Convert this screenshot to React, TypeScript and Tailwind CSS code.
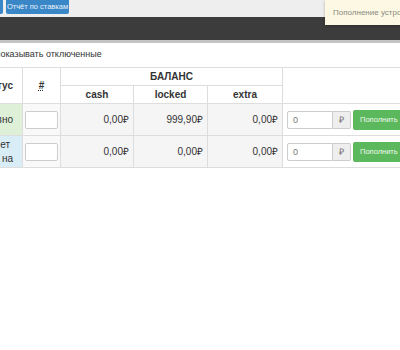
const rows = [
  { status: [{ t: 'вно', pr: 'pr-[9px]' }], tone: 'bg-[#dff0d8]', cash: '0,00₽', locked: '999,90₽', extra: '0,00₽' },
  {
    status: [
      { t: 'ет', pr: 'pr-[12px]' },
      { t: 'на', pr: 'pr-[9px]' },
    ],
    tone: 'bg-[#d9edf7]',
    cash: '0,00₽',
    locked: '0,00₽',
    extra: '0,00₽',
  },
];

const App = () => {
  return (
    <div className="relative w-[400px] h-[350px] overflow-hidden bg-white text-[#333] font-['Liberation_Sans',Arial,sans-serif]">
      {/* top toolbar */}
      <div className="h-[17px] bg-[#eeeeee] flex items-start gap-[3px] ml-[-40px]">
        <div className="h-[14px] w-[43px] bg-[#3a87c8] rounded-b-[2px]" />
        <div className="h-[14px] w-[63px] bg-[#3a87c8] rounded-b-[2px] text-[#e8f1fa] text-[7.5px] leading-[14px] text-center whitespace-nowrap">
          Отчёт по ставкам
        </div>
      </div>
      <div className="h-[23px] bg-[#3c3c3c]" />
      <div className="h-[3px] bg-[#c4c4c4]" />

      <div className="absolute top-0 left-[325px] w-[100px] h-[25px] bg-[#fcf8e3] shadow-[0_1px_3px_rgba(0,0,0,0.25)] text-[#8a8a80] text-[8px] leading-[25px] pl-[8px] whitespace-nowrap">
        Пополнение устройства
      </div>

      <div className="mt-[4px] h-[14px] ml-[-6px] text-[9px] leading-[14px] whitespace-nowrap">
        Показывать отключенные
      </div>

      <div className="mt-[6px] ml-[-45px]">
        <table className="table-fixed border-collapse text-[10px] w-[505px]">
          <colgroup>
            <col className="w-[67px]" />
            <col className="w-[38px]" />
            <col className="w-[73px]" />
            <col className="w-[74px]" />
            <col className="w-[75px]" />
            <col className="w-[178px]" />
          </colgroup>
          <thead>
            <tr className="h-[18px]">
              <th rowSpan={2} className="border border-[#dddddd] text-right pr-[9px] font-bold">Статус</th>
              <th rowSpan={2} className="border border-[#dddddd] font-bold underline decoration-dotted">#</th>
              <th colSpan={3} className="border border-[#dddddd] font-bold">БАЛАНС</th>
              <th rowSpan={2} className="border border-[#dddddd] font-bold text-left pl-[126px]">Действия</th>
            </tr>
            <tr className="h-[18px]">
              <th className="border border-[#dddddd] font-bold">cash</th>
              <th className="border border-[#dddddd] font-bold">locked</th>
              <th className="border border-[#dddddd] font-bold">extra</th>
            </tr>
          </thead>
          <tbody>
            {rows.map((r, i) => (
              <tr key={i} className="h-[32px]">
                <td className={`border border-[#dddddd] ${r.tone} text-right leading-[14px]`}>
                  {r.status.map((s) => (
                    <div key={s.t} className={s.pr}>
                      {s.t}
                    </div>
                  ))}
                </td>
                <td className="border border-[#dddddd] bg-[#f9f9f9] px-[2px]">
                  <div className="h-[18px] w-[33px] mx-auto bg-white border border-[#cccccc] rounded-[2px]" />
                </td>
                <td className="border border-[#dddddd] bg-[#f5f5f5] text-right pr-[4px]">{r.cash}</td>
                <td className="border border-[#dddddd] bg-[#f5f5f5] text-right pr-[4px]">{r.locked}</td>
                <td className="border border-[#dddddd] bg-[#f5f5f5] text-right pr-[4px]">{r.extra}</td>
                <td className="border border-[#dddddd] bg-white pl-[4px]">
                  <div className="flex items-center">
                    <div className="h-[18px] w-[46px] border border-[#cccccc] rounded-l-[2px] text-[9px] text-[#777] leading-[16px] pl-[5px]">
                      0
                    </div>
                    <div className="h-[18px] w-[18px] bg-[#eeeeee] border border-l-0 border-[#cccccc] rounded-r-[2px] text-[9px] text-[#777] leading-[16px] text-center">
                      ₽
                    </div>
                    <button className="ml-[2px] h-[20px] px-[7px] bg-[#5cb85c] text-[#eef8ee] text-[7.5px] rounded-[2px] whitespace-nowrap">
                      Пополнить
                    </button>
                  </div>
                </td>
              </tr>
            ))}
          </tbody>
        </table>
      </div>
    </div>
  );
};

export default App;
